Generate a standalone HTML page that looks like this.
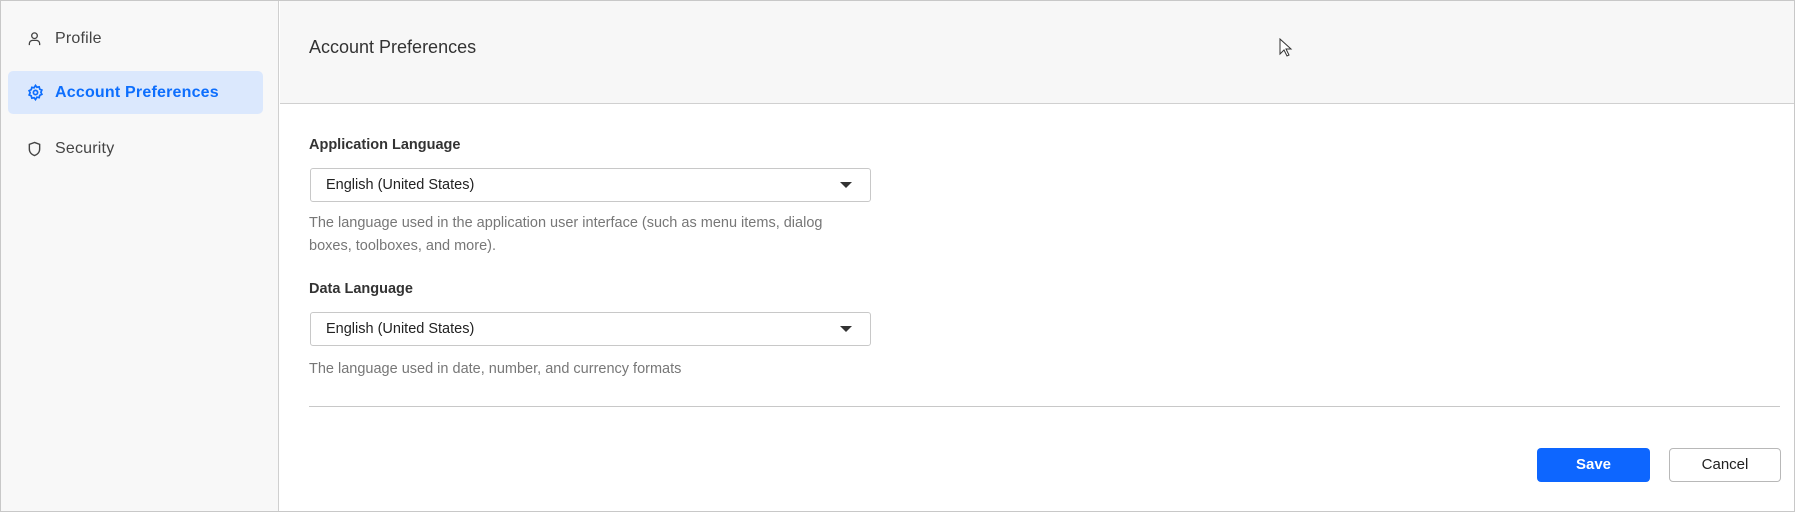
<!DOCTYPE html>
<html><head><meta charset="utf-8"><style>
*{box-sizing:border-box;margin:0;padding:0}
body{width:1795px;height:512px;font-family:"Liberation Sans",sans-serif;background:#fff;position:relative;overflow:hidden;color:#333}
.frame{position:absolute;left:0;top:0;width:1795px;height:512px;border:1px solid #c8c8c8}
.side{position:absolute;left:1px;top:1px;width:278px;height:510px;background:#f8f8f8;border-right:1px solid #d0d0d0}
.item{position:absolute;left:7px;width:255px;height:43px;border-radius:5px;display:flex;align-items:center;font-size:16px;color:#444;letter-spacing:.2px}
.item svg{position:absolute;left:19px}
.item span{position:absolute;left:47px}
.item.act{background:#dbe8fd;color:#0d6efd;font-weight:bold}
.head{position:absolute;left:280px;top:1px;right:1px;height:103px;background:#f7f7f7;border-bottom:1px solid #d0d0d0}
.title{position:absolute;left:309px;top:37px;font-size:18px;color:#333}
.lbl{position:absolute;left:309px;font-size:14.5px;font-weight:bold;color:#333}
.sel{position:absolute;left:310px;width:561px;height:34px;border:1px solid #c8c8c8;border-radius:3px;font-size:14.5px;padding-left:15px;line-height:32px;color:#222}
.sel:after{content:"";position:absolute;right:18px;top:13px;border-left:6px solid transparent;border-right:6px solid transparent;border-top:6px solid #333}
.desc{position:absolute;left:309px;font-size:14.5px;color:#777;line-height:23px;width:545px}
.div{position:absolute;left:309px;top:406px;width:1471px;height:1px;background:#c8c8c8}
.btn{position:absolute;top:448px;height:34px;border-radius:4px;font-size:15px;text-align:center;line-height:34px}
</style></head><body>
<div class="frame"></div>
<div class="side">
 <div class="item" style="top:16px"><svg width="15" height="15" viewBox="0 0 16 16" fill="none" stroke="#444" stroke-width="1.4"><circle cx="8" cy="5" r="3"/><path d="M2.5 15v-1.5a3.5 3.5 0 0 1 3.5-3.5h4a3.5 3.5 0 0 1 3.5 3.5V15"/></svg><span>Profile</span></div>
 <div class="item act" style="top:70px"><svg width="17" height="17" viewBox="0 0 24 24" fill="none" stroke="#0d6efd" stroke-width="2.4"><circle cx="12" cy="12" r="3"/><path d="M12 2l2 2.6 3.2-.6.8 3.2 3 1.4-1.4 3 1.4 3-3 1.4-.8 3.2-3.2-.6L12 22l-2-2.6-3.2.6-.8-3.2-3-1.4 1.4-3-1.4-3 3-1.4.8-3.2 3.2.6z"/></svg><span>Account Preferences</span></div>
 <div class="item" style="top:126px"><svg width="15" height="16" viewBox="0 0 16 17" fill="none" stroke="#444" stroke-width="1.5"><path d="M8 1.5l5.5 2v5c0 3.5-2.5 6-5.5 7-3-1-5.5-3.5-5.5-7v-5z"/></svg><span>Security</span></div>
</div>
<div class="head"></div>
<div class="title">Account Preferences</div>
<svg style="position:absolute;left:1279px;top:38px" width="14" height="20" viewBox="0 0 14 20"><path d="M1 1v15l4-4 3 6 2-1-3-6h5z" fill="#fff" stroke="#333" stroke-width="1"/></svg>
<div class="lbl" style="top:137px">Application Language</div>
<div class="sel" style="top:168px">English (United States)</div>
<div class="desc" style="top:212px">The language used in the application user interface (such as menu items, dialog boxes, toolboxes, and more).</div>
<div class="lbl" style="top:281px">Data Language</div>
<div class="sel" style="top:312px">English (United States)</div>
<div class="desc" style="top:358px;width:700px">The language used in date, number, and currency formats</div>
<div class="div"></div>
<div class="btn" style="left:1537px;width:113px;background:#0d66ff;color:#fff;font-weight:bold">Save</div>
<div class="btn" style="left:1669px;width:112px;border:1px solid #b8b8b8;color:#222;line-height:32px">Cancel</div>
</body></html>
